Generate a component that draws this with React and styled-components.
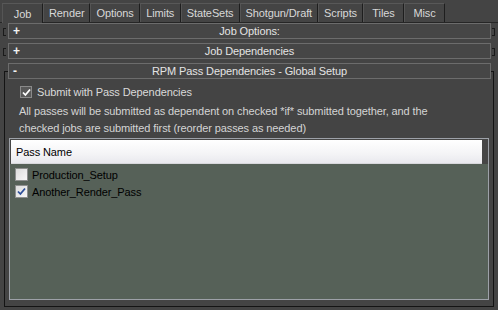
import React from "react";
import styled, { createGlobalStyle, css } from "styled-components";

const GlobalStyle = createGlobalStyle`
  html, body {
    margin: 0;
    padding: 0;
    background: #444444;
  }
  body {
    font-family: "Liberation Sans", Arial, sans-serif;
    font-size: 11px;
    letter-spacing: -0.1px;
    color: #dadada;
  }
`;

const Window = styled.div`
  width: 498px;
  height: 310px;
  background: #444444;
  display: flex;
  flex-direction: column;
  overflow: hidden;
`;

const TabBar = styled.div`
  display: flex;
  height: 23px;
  box-sizing: border-box;
  padding: 3px 0 0 2px;
  border-bottom: 1px solid #262626;
`;

const Tab = styled.div`
  height: 19px;
  min-width: 41px;
  box-sizing: border-box;
  padding: 0 5px;
  display: flex;
  align-items: center;
  justify-content: center;
  border-top: 1px solid #585858;
  border-left: 1px solid #555555;
  border-right: 1px solid #1e1e1e;
  color: #d8d8d8;
  ${(p) =>
    p.active &&
    css`
      height: 20px;
      margin-bottom: -1px;
      background: #444444;
    `}
`;

const Rollouts = styled.div`
  display: flex;
  flex-direction: column;
  gap: 4px;
`;

const Rollout = styled.div`
  position: relative;
  padding: 0 7px 0 8px;

  ${(p) =>
    p.open
      ? css`
          &::before {
            content: "";
            position: absolute;
            left: 4px;
            right: 4px;
            top: 8px;
            bottom: 0;
            border: 1px solid #141414;
            border-top: none;
          }
          &::after {
            content: "";
            position: absolute;
            left: 4px;
            right: 4px;
            top: 8px;
            height: 1px;
            background: linear-gradient(
              to right,
              #141414 4px,
              transparent 4px,
              transparent calc(100% - 4px),
              #141414 calc(100% - 4px)
            );
          }
        `
      : css`
          &::before,
          &::after {
            content: "";
            position: absolute;
            top: 5px;
            width: 2px;
            height: 6px;
            border: 1px solid #1a1a1a;
          }
          &::before {
            left: 3px;
            border-right: none;
          }
          &::after {
            right: 3px;
            border-left: none;
          }
        `}
`;

const RolloutHeader = styled.div`
  position: relative;
  z-index: 1;
  height: 16px;
  box-sizing: border-box;
  border: 1px solid #6c6c6c;
  background: #464646;
  display: flex;
  align-items: center;
  justify-content: center;
  color: #e4e4e4;
`;

const Toggle = styled.span`
  position: absolute;
  left: 4px;
  top: 0;
  line-height: 14px;
  font-weight: bold;
  font-size: 12px;
  color: #f2f2f2;
`;

const Body = styled.div`
  display: flex;
  flex-direction: column;
  padding: 4px 2px 7px 1px;
`;

const CheckRow = styled.label`
  display: flex;
  align-items: center;
  gap: 5px;
  height: 18px;
  margin-left: 11px;
`;

const DarkBox = styled.span`
  width: 12px;
  height: 12px;
  box-sizing: border-box;
  border: 1px solid #8a8a8a;
  background: #585858;
  display: flex;
  align-items: center;
  justify-content: center;
`;

const Desc = styled.p`
  margin: 2px 0 0 10px;
  line-height: 17px;
  color: #d4d4d4;
`;

const List = styled.div`
  margin-top: 1px;
  height: 160px;
  border: 1px solid #9da1a8;
  background: #566158;
  display: flex;
  flex-direction: column;
`;

const HeaderStrip = styled.div`
  display: flex;
  background: #464646;
  padding: 1px 6px 0 1px;
`;

const ColumnHeader = styled.div`
  flex: 1;
  height: 23px;
  display: flex;
  align-items: center;
  padding-left: 5px;
  background: linear-gradient(#ffffff, #f4f4f6 60%, #e9e9ee);
  border-bottom: 1px solid #d8d8dc;
  color: #000;
`;

const Rows = styled.div`
  padding-top: 2px;
`;

const Row = styled.div`
  display: flex;
  align-items: center;
  gap: 4px;
  height: 17px;
  padding-left: 5px;
  color: #000;
`;

const LightBox = styled.span`
  width: 13px;
  height: 13px;
  box-sizing: border-box;
  border: 1px solid #8e8f8f;
  background: linear-gradient(135deg, #dcdcdc, #f7f7f7);
  display: flex;
  align-items: center;
  justify-content: center;
`;

const Check = ({ color }) => (
  <svg width="9" height="9" viewBox="0 0 9 9">
    <path d="M1 4.5 L3.4 7 L8 1.5" fill="none" stroke={color} strokeWidth="1.8" />
  </svg>
);

const tabs = [
  "Job",
  "Render",
  "Options",
  "Limits",
  "StateSets",
  "Shotgun/Draft",
  "Scripts",
  "Tiles",
  "Misc",
];

const passes = [
  { name: "Production_Setup", checked: false },
  { name: "Another_Render_Pass", checked: true },
];

const App = () => {
  return (
    <Window>
      <GlobalStyle />
      <TabBar>
        {tabs.map((t, i) => (
          <Tab key={t} active={i === 0}>
            {t}
          </Tab>
        ))}
      </TabBar>
      <Rollouts>
        <Rollout>
          <RolloutHeader>
            <Toggle>+</Toggle>
            Job Options:
          </RolloutHeader>
        </Rollout>
        <Rollout>
          <RolloutHeader>
            <Toggle>+</Toggle>
            Job Dependencies
          </RolloutHeader>
        </Rollout>
        <Rollout open>
          <RolloutHeader>
            <Toggle>-</Toggle>
            RPM Pass Dependencies - Global Setup
          </RolloutHeader>
          <Body>
            <CheckRow>
              <DarkBox>
                <Check color="#ffffff" />
              </DarkBox>
              Submit with Pass Dependencies
            </CheckRow>
            <Desc>
              All passes will be submitted as dependent on checked *if* submitted together, and the
              <br />
              checked jobs are submitted first (reorder passes as needed)
            </Desc>
            <List>
              <HeaderStrip>
                <ColumnHeader>Pass Name</ColumnHeader>
              </HeaderStrip>
              <Rows>
                {passes.map((p) => (
                  <Row key={p.name}>
                    <LightBox>{p.checked && <Check color="#2d4f9a" />}</LightBox>
                    {p.name}
                  </Row>
                ))}
              </Rows>
            </List>
          </Body>
        </Rollout>
      </Rollouts>
    </Window>
  );
};

export default App;
